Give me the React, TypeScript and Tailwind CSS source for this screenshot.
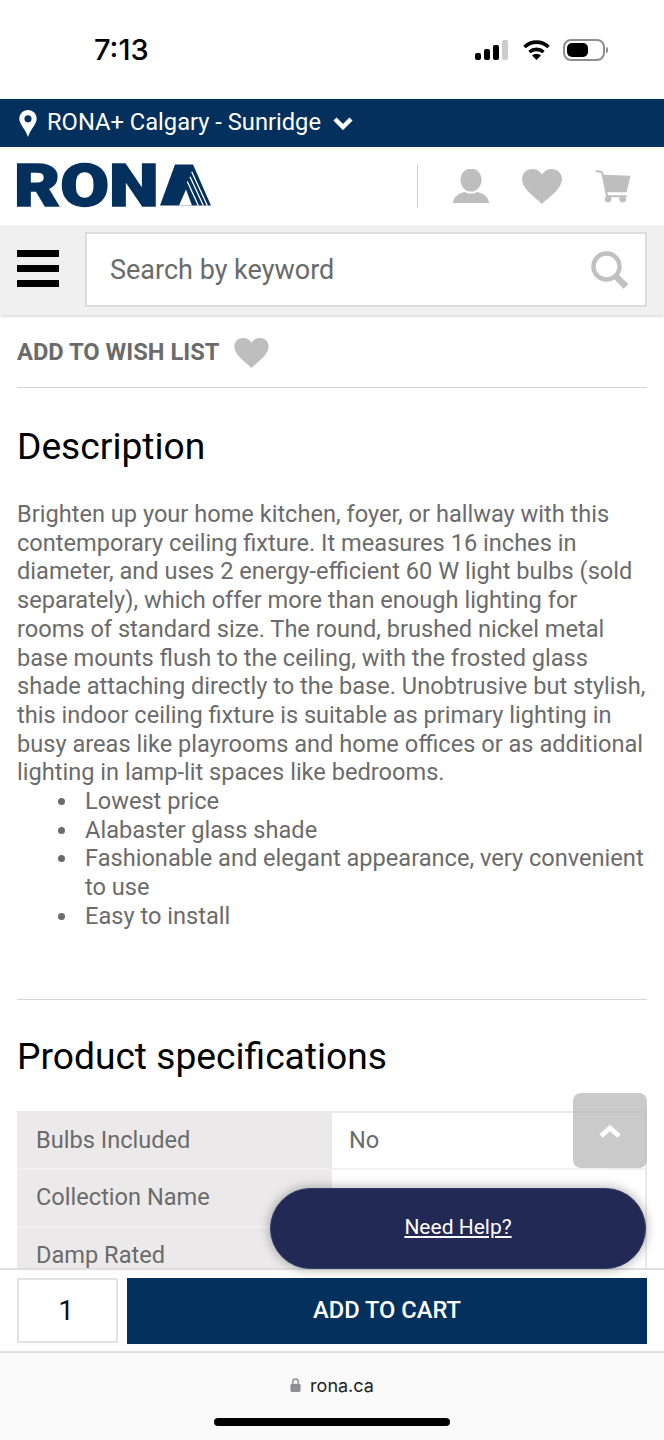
import React from 'react';

const descriptionLines = [
  'Brighten up your home kitchen, foyer, or hallway with this',
  'contemporary ceiling fixture. It measures 16 inches in',
  'diameter, and uses 2 energy-efficient 60 W light bulbs (sold',
  'separately), which offer more than enough lighting for',
  'rooms of standard size. The round, brushed nickel metal',
  'base mounts flush to the ceiling, with the frosted glass',
  'shade attaching directly to the base. Unobtrusive but stylish,',
  'this indoor ceiling fixture is suitable as primary lighting in',
  'busy areas like playrooms and home offices or as additional',
  'lighting in lamp-lit spaces like bedrooms.',
];

const bullets = [
  ['Lowest price'],
  ['Alabaster glass shade'],
  ['Fashionable and elegant appearance, very convenient', 'to use'],
  ['Easy to install'],
];

const specs = [
  { name: 'Bulbs Included', value: 'No' },
  { name: 'Collection Name', value: '' },
  { name: 'Damp Rated', value: '' },
];

const HeartIcon = ({ className }: { className: string }) => (
  <svg viewBox="0 0 40 35" className={className} fill="currentColor">
    <path d="M20 35 C14 29 0 20 0 10 C0 4 5 0 10.5 0 C14.5 0 18 2 20 5.5 C22 2 25.5 0 29.5 0 C35 0 40 4 40 10 C40 20 26 29 20 35 Z" />
  </svg>
);

const Logo = () => (
  <div className="flex items-center text-[#03305c] h-[42px] -mt-[2px] -ml-[3px]">
    <span className="font-['Roboto'] text-[59px] leading-none font-black w-[146px] scale-x-[1.2] origin-left whitespace-nowrap [-webkit-text-stroke:1.5px_#03305c]">
      RON
    </span>
    <svg viewBox="0 0 51 41" className="w-[51px] h-[42px]">
      <path d="M0 41 L15 0 L33 0 L51 41 Z" fill="currentColor" />
      <path d="M19 41 L26 25 L32 41 Z" fill="#fff" />
      <path d="M27.3 17 L38.3 41 M30 12.3 L43.3 41 M31.7 7.3 L47.3 41" stroke="#fff" strokeWidth="1.3" fill="none" />
    </svg>
  </div>
);

const App: React.FC = () => {
  return (
    <div className="relative w-[664px] h-[1440px] flex flex-col overflow-hidden bg-white font-['Roboto',sans-serif]">
      {/* ios status bar */}
      <div className="h-[99px] shrink-0 flex items-center justify-between pl-[94px] pr-[56px]">
        <span className="font-['Inter',sans-serif] text-[29px] font-medium text-black">7:13</span>
        <div className="flex items-center gap-[12px]">
          <svg viewBox="0 0 34 20" className="w-[34px] h-[20px] mr-[1px]">
            <rect x="0" y="13" width="6" height="7" rx="2" fill="#000" />
            <rect x="9" y="9" width="6" height="11" rx="2" fill="#000" />
            <rect x="18" y="5" width="6" height="15" rx="2" fill="#000" />
            <rect x="27" y="0" width="6" height="20" rx="2" fill="#ccc" />
          </svg>
          <svg viewBox="0 0 28 21" className="w-[29px] h-[21px]" fill="none" stroke="#000" strokeWidth="3.6">
            <path d="M2 8 C9 1.5 19 1.5 26 8" />
            <path d="M7 13 C11 9.5 17 9.5 21 13" />
            <path d="M14 21 L9.5 16.5 C12 14.6 16 14.6 18.5 16.5 Z" fill="#000" stroke="none" />
          </svg>
          <div className="flex items-center gap-[1px]">
            <div className="w-[42px] h-[22px] rounded-[8px] border-2 border-[#8e8e8e] p-[2px] bg-white">
              <div className="w-[21px] h-full rounded-[5px] bg-black" />
            </div>
            <div className="w-[2px] h-[6px] rounded-r bg-[#8e8e8e]" />
          </div>
        </div>
      </div>

      {/* store selector */}
      <div className="h-[48px] shrink-0 bg-[#03305c] flex items-center pl-[19px] text-white">
        <svg viewBox="0 0 18 28" className="w-[18px] h-[27px] mr-[10px]" fill="#fff">
          <path fillRule="evenodd" d="M9 0 C4 0 0 4 0 9 C0 15 6 19 9 28 C12 19 18 15 18 9 C18 4 14 0 9 0 Z M9 5.5 A3.7 3.7 0 1 1 9 12.9 A3.7 3.7 0 1 1 9 5.5 Z" />
        </svg>
        <span className="text-[23.7px] leading-none -mt-[1px]">RONA+ Calgary - Sunridge</span>
        <svg viewBox="0 0 20 14" className="w-[20px] h-[14px] ml-[12px]" fill="none" stroke="#fff" strokeWidth="4.5">
          <path d="M2 3 L10 11 L18 3" />
        </svg>
      </div>

      {/* logo row */}
      <div className="h-[78px] shrink-0 flex items-center justify-between pl-[17px] pr-[33px]">
        <Logo />
        <div className="flex items-center text-[#bebebe]">
          <div className="w-px h-[44px] bg-[#d2d2d2] mr-[35px]" />
          <svg viewBox="0 0 36 34" className="w-[36px] h-[34px] mr-[33px]" fill="currentColor">
            <ellipse cx="18" cy="11" rx="10.5" ry="11.5" />
            <path d="M0 34 C0 28 6 24 12 23 C15 25 21 25 24 23 C30 24 36 28 36 34 Z" />
          </svg>
          <HeartIcon className="w-[40px] h-[35px] mr-[33px]" />
          <svg viewBox="0 0 36 34" className="w-[36px] h-[33px]" fill="currentColor">
            <path d="M0 0 L7 1 L8.5 5 L36 6 L32 23 L12 23 L13 26 L32 26 L32 28 L11 28 L6 3 L0 2 Z" />
            <circle cx="13" cy="30" r="3.5" />
            <circle cx="28" cy="30" r="3.5" />
          </svg>
        </div>
      </div>

      {/* search row */}
      <div className="h-[90px] shrink-0 bg-[#f0f0f0] shadow-[0_2px_2px_rgba(0,0,0,0.12)] z-10 flex items-start pt-[7px] pl-[17px] pr-[17px]">
        <div className="flex flex-col gap-[8px] w-[42px] mt-[18px] mr-[26px]">
          <div className="h-[7px] bg-black" />
          <div className="h-[7px] bg-black" />
          <div className="h-[7px] bg-black" />
        </div>
        <div className="flex-1 h-[75px] bg-white border-2 border-[#dddddd] flex items-center justify-between pl-[23px] pr-[16px]">
          <span className="text-[27px] text-[#6a6a6a] mt-[1px]">Search by keyword</span>
          <svg viewBox="0 0 38 38" className="w-[38px] h-[38px]" fill="none" stroke="#c0c0c0">
            <circle cx="15.5" cy="15.5" r="13" strokeWidth="4.5" />
            <path d="M24.5 25 L35 35.5" strokeWidth="6.5" />
          </svg>
        </div>
      </div>

      {/* page content */}
      <div className="flex-1 min-h-0 overflow-hidden px-[17px]">
        <div className="flex items-center h-[73px] pt-[3px] border-b border-[#d4d4d4]">
          <span className="text-[23.7px] font-bold text-[#6b6b6b] mr-[15px]">ADD TO WISH LIST</span>
          <HeartIcon className="w-[35px] h-[30px] text-[#bebebe]" />
        </div>

        <h2 className="text-[37.2px] leading-[42px] text-black mt-[37px]">Description</h2>

        <div className="mt-[33px] text-[23.6px] leading-[28.7px] text-[#6b6b6b] whitespace-nowrap">
          {descriptionLines.map((line) => (
            <div key={line}>{line}</div>
          ))}
          <ul>
            {bullets.map((lines) => (
              <li key={lines[0]} className="flex items-start">
                <span className="w-[7px] h-[7px] rounded-full bg-[#6b6b6b] ml-[41px] mr-[20px] mt-[11px] shrink-0" />
                <span>
                  {lines.map((line) => (
                    <div key={line}>{line}</div>
                  ))}
                </span>
              </li>
            ))}
          </ul>
        </div>

        <div className="mt-[68px] border-t border-[#d4d4d4]" />

        <h2 className="text-[37.2px] leading-[42px] text-black mt-[35px]">Product specifications</h2>

        <div className="mt-[34px] border-t-2 border-r-2 border-[#ebe9ea]">
          {specs.map((spec) => (
            <div key={spec.name} className="flex h-[57.5px] border-b-2 border-[#f1f0f0] text-[23.6px] text-[#6b6b6b]">
              <div className="w-[315px] bg-[#ebe9ea] pl-[19px] flex items-center">{spec.name}</div>
              <div className="flex-1 pl-[17px] flex items-center">{spec.value}</div>
            </div>
          ))}
        </div>
      </div>

      {/* add to cart */}
      <div className="h-[85px] shrink-0 bg-white border-t-2 border-b-2 border-[#dedede] z-10 flex items-start pt-[8px] px-[17px] gap-[9px]">
        <div className="w-[101px] h-[65px] border-2 border-[#e2e2e2] flex items-center justify-center pr-[3px] text-[28px] text-[#111]">
          1
        </div>
        <div className="flex-1 h-[66px] bg-[#03305c] flex items-center justify-center text-[23.7px] font-medium text-white">
          ADD TO CART
        </div>
      </div>

      {/* safari bar */}
      <div className="h-[87px] shrink-0 bg-[#fafafa] flex flex-col items-center z-10">
        <div className="flex items-center gap-[9px] mt-[19px] h-[26px]">
          <svg viewBox="0 0 12 15" className="w-[11px] h-[14px]">
            <path d="M3 6 V4 a3 3 0 0 1 6 0 V6" fill="none" stroke="#8e8e93" strokeWidth="1.6" />
            <rect x="0.5" y="6" width="11" height="9" rx="1.5" fill="#8e8e93" />
          </svg>
          <span className="font-['Inter',sans-serif] text-[18px] text-[#222]">rona.ca</span>
        </div>
        <div className="w-[236px] h-[8px] rounded-full bg-black mt-[20px]" />
      </div>

      {/* floating buttons */}
      <div className="absolute left-[573px] top-[1093px] w-[74px] h-[75px] rounded-[8px] bg-[#b4b4b4]/70 z-20 flex items-start justify-center pt-[31px]">
        <svg viewBox="0 0 22 14" className="w-[22px] h-[14px]" fill="none" stroke="#fff" strokeWidth="5">
          <path d="M2 12 L11 4 L20 12" />
        </svg>
      </div>
      <div className="absolute left-[270px] top-[1188px] w-[376px] h-[81px] rounded-full bg-[#222955] border border-[#333a63] shadow-[0_0_12px_rgba(0,0,0,0.35)] z-20 flex items-center justify-center">
        <a className="text-[21px] text-white underline -mt-[2px]">Need Help?</a>
      </div>
    </div>
  );
};

export default App;
